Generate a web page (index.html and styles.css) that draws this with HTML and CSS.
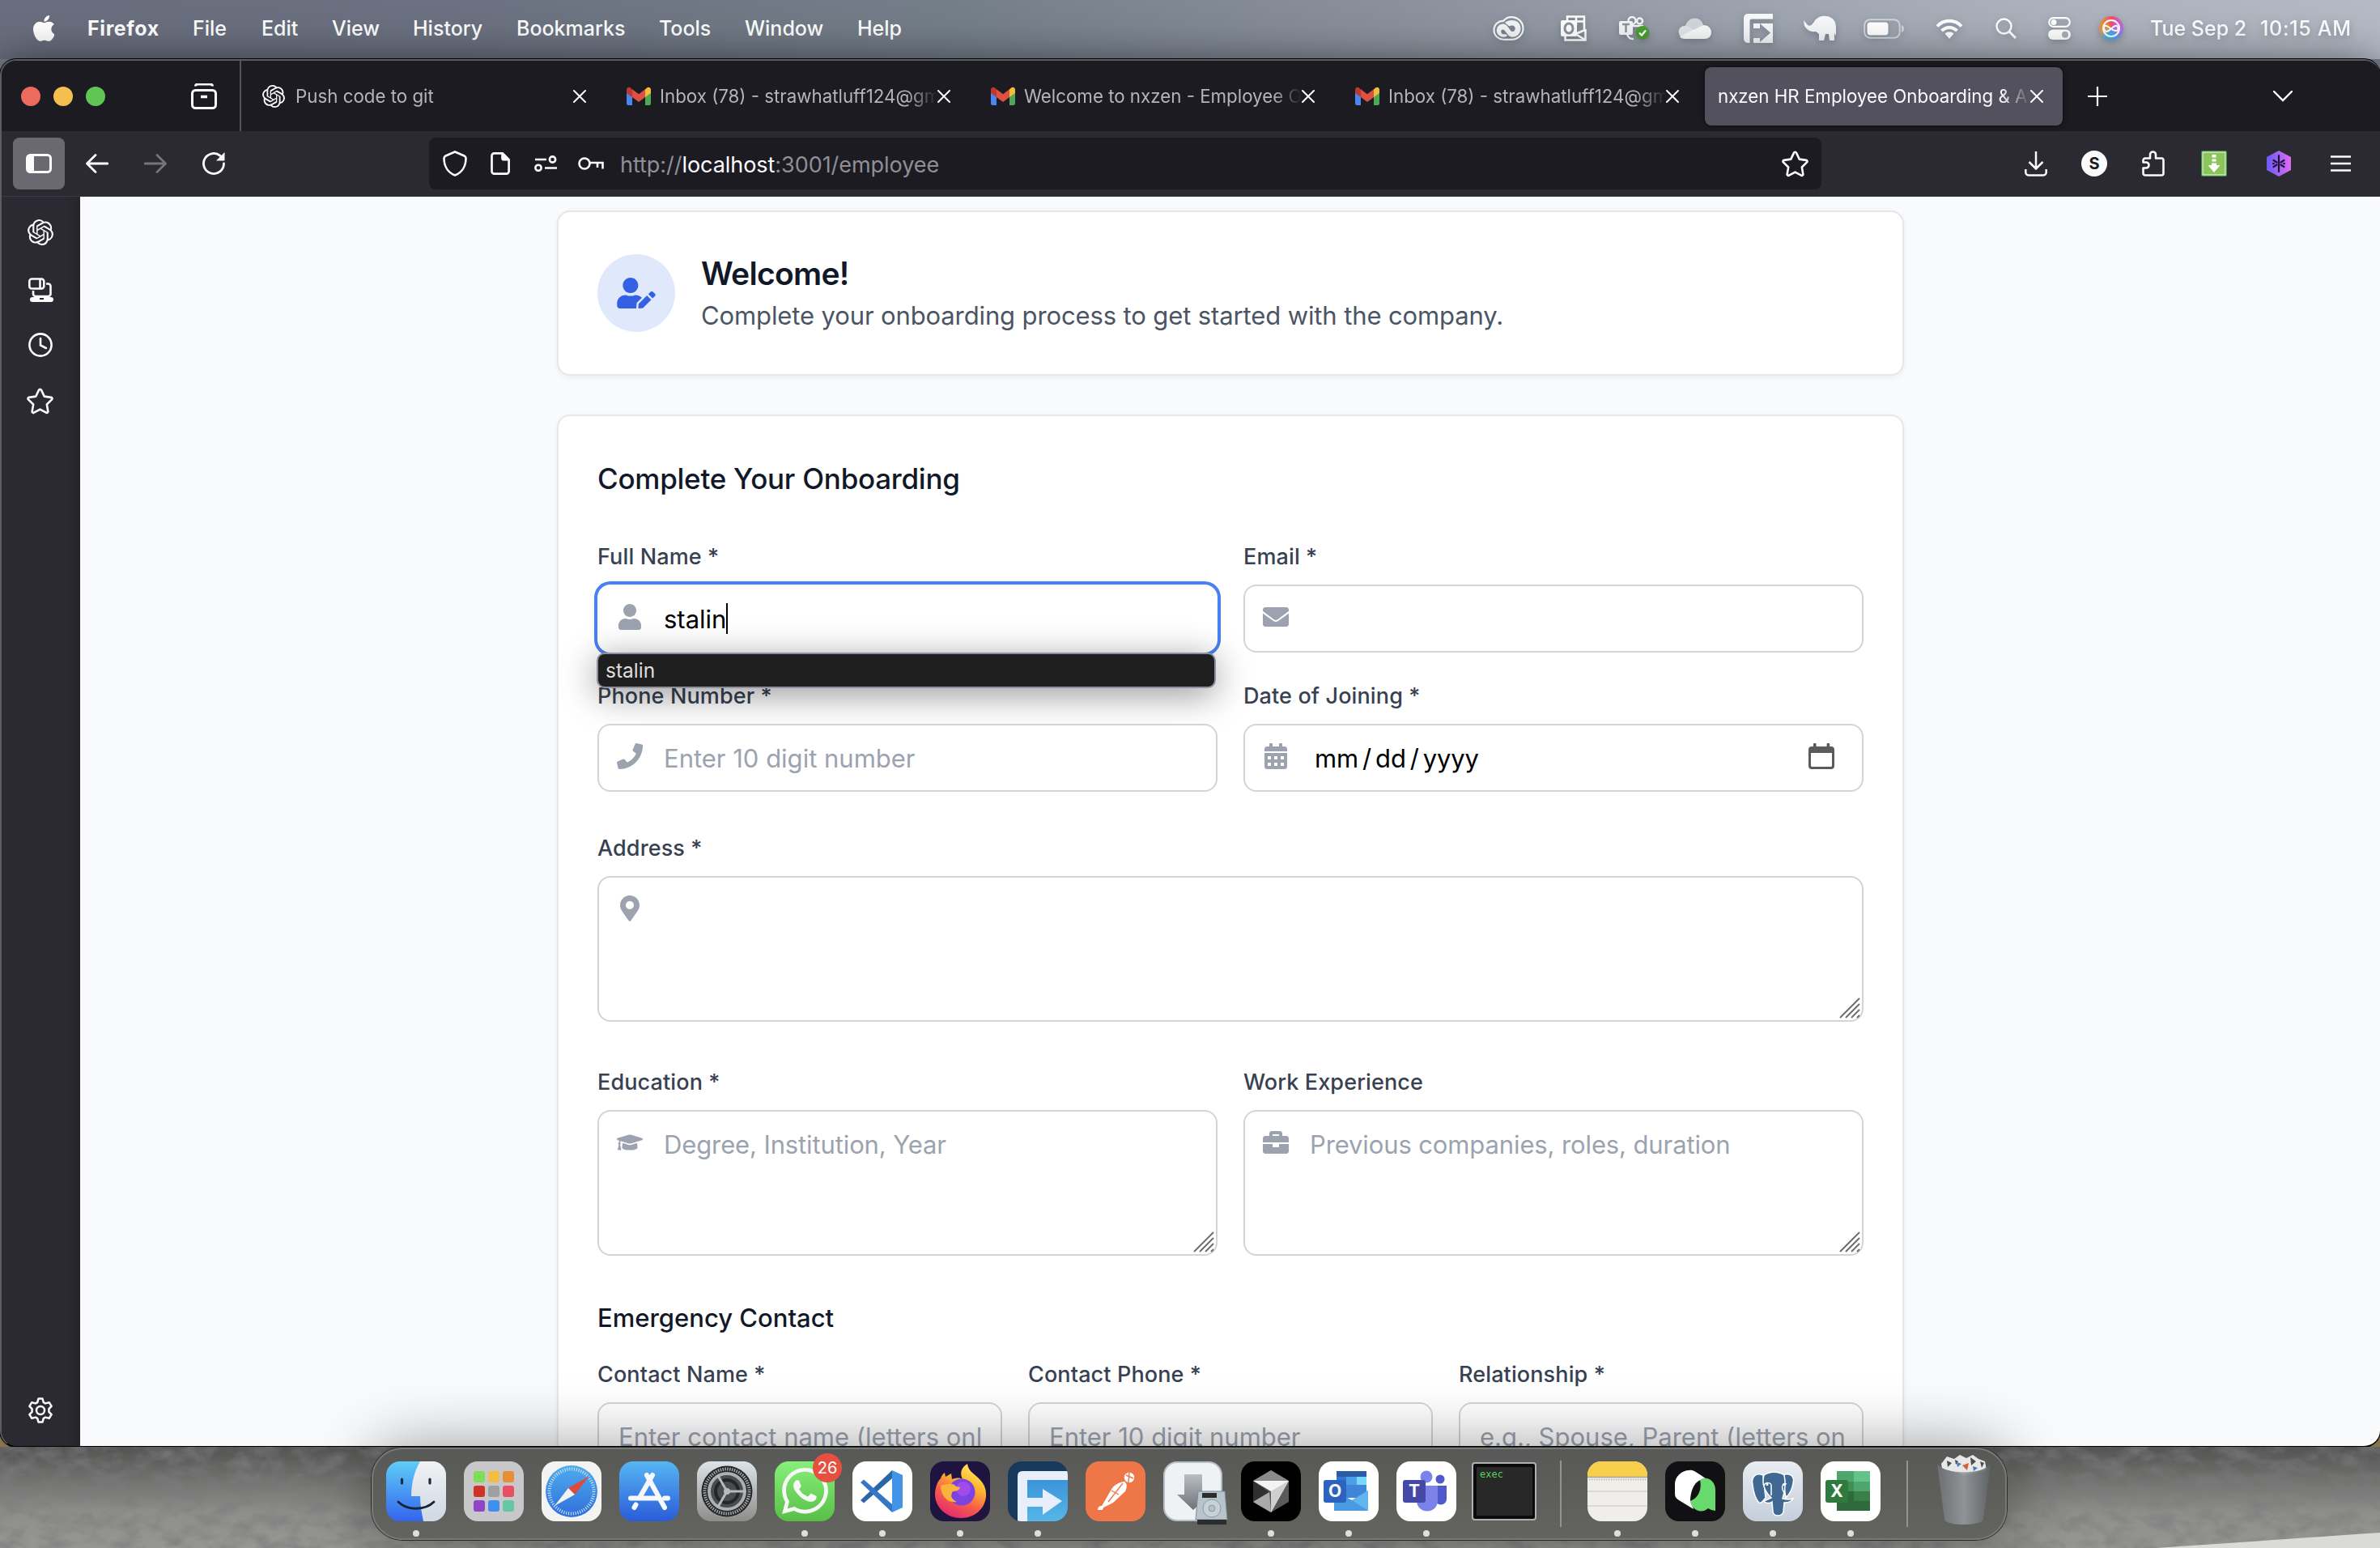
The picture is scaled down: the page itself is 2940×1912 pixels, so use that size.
FILE: index.html
```html
<!DOCTYPE html>
<html lang="en">
<head>
<meta charset="utf-8">
<title>nxzen HR Employee Onboarding</title>
<link rel="stylesheet" href="styles.css">
</head>
<body>
<svg class="defs" width="0" height="0" aria-hidden="true">
  <symbol id="openai" viewBox="0 0 24 24"><path d="M22.2819 9.8211a5.9847 5.9847 0 0 0-.5157-4.9108 6.0462 6.0462 0 0 0-6.5098-2.9A6.0651 6.0651 0 0 0 4.9807 4.1818a5.9847 5.9847 0 0 0-3.9977 2.9 6.0462 6.0462 0 0 0 .7427 7.0966 5.98 5.98 0 0 0 .511 4.9107 6.051 6.051 0 0 0 6.5146 2.9001A5.9847 5.9847 0 0 0 13.2599 24a6.0557 6.0557 0 0 0 5.7718-4.2058 5.9894 5.9894 0 0 0 3.9977-2.9001 6.0557 6.0557 0 0 0-.7475-7.0729zm-9.022 12.6081a4.4755 4.4755 0 0 1-2.8764-1.0408l.1419-.0804 4.7783-2.7582a.7948.7948 0 0 0 .3927-.6813v-6.7369l2.02 1.1686a.071.071 0 0 1 .038.052v5.5826a4.504 4.504 0 0 1-4.4945 4.4944zm-9.6607-4.1254a4.4708 4.4708 0 0 1-.5346-3.0137l.142.0852 4.783 2.7582a.7712.7712 0 0 0 .7806 0l5.8428-3.3685v2.3324a.0804.0804 0 0 1-.0332.0615L9.74 19.9502a4.4992 4.4992 0 0 1-6.1408-1.6464zM2.3408 7.8956a4.485 4.485 0 0 1 2.3655-1.9728V11.6a.7664.7664 0 0 0 .3879.6765l5.8144 3.3543-2.0201 1.1685a.0757.0757 0 0 1-.071 0l-4.8303-2.7865A4.504 4.504 0 0 1 2.3408 7.872zm16.5963 3.8558L13.1038 8.364 15.1192 7.2a.0757.0757 0 0 1 .071 0l4.8303 2.7913a4.4944 4.4944 0 0 1-.6765 8.1042v-5.6772a.79.79 0 0 0-.407-.667zm2.0107-3.0231l-.142-.0852-4.7735-2.7818a.7759.7759 0 0 0-.7854 0L9.409 9.2297V6.8974a.0662.0662 0 0 1 .0284-.0615l4.8303-2.7866a4.4992 4.4992 0 0 1 6.6802 4.66zM8.3065 12.863l-2.02-1.1638a.0804.0804 0 0 1-.038-.0567V6.0742a4.4992 4.4992 0 0 1 7.3757-3.4537l-.142.0805L8.704 5.459a.7948.7948 0 0 0-.3927.6813zm1.0976-2.3654l2.602-1.4998 2.6069 1.4998v2.9994l-2.5974 1.4997-2.6067-1.4997Z"/></symbol>
  <symbol id="gmail" viewBox="0 0 30 24"><path fill="#4a86ee" d="M0 5h7v18H2.500a2.500 2.500 0 0 1-2.500-2.500z"/><path fill="#4fa855" d="M23 5h7v15.500a2.500 2.500 0 0 1-2.500 2.500H23z"/><path fill="#f3bd3a" d="M23 3.500 25 1.500c2-1.500 5-.5 5 2.500v4l-7 5z"/><path fill="#b83a30" d="M7 3.500 5 1.500c-2-1.500-5-.5-5 2.500v4l7 5z"/><path fill="#dd5043" d="m7 3.200 8 6 8-6V13l-8 6-8-6z"/></symbol>
  <symbol id="close" viewBox="0 0 16 16"><path d="m1 1 14 14M15 1 1 15" stroke="currentColor" stroke-width="2" fill="none" stroke-linecap="round"/></symbol>
  <symbol id="star" viewBox="0 0 32 32"><path d="M14.600 2.600 10.900 10.300 2.700 11.500c-1.200.2-1.700 1.600-.8 2.500l6 5.900-1.400 8.300c-.2 1.200 1 2.100 2.100 1.600L16 25.800l7.400 4c1.100.5 2.300-.4 2.100-1.600l-1.400-8.300 6-5.900c.9-.9.4-2.300-.8-2.500l-8.200-1.200-3.700-7.700c-.6-1.100-2.200-1.100-2.800 0z" fill="none" stroke="currentColor" stroke-width="2.500" stroke-linejoin="round"/></symbol>
  <symbol id="grip" viewBox="0 0 26 26"><path d="M1 25 25 1M8 25 25 8M15 25 25 15M22 25l3-3" stroke="#6f6f6f" stroke-width="2" fill="none"/></symbol>
</svg>

<header class="menubar">
  <svg class="apple" viewBox="4 32 366 448"><path fill="#fff" d="M318.700 268.700c-.2-36.700 16.400-64.400 50-84.800-18.800-26.900-47.200-41.700-84.700-44.600-35.500-2.800-74.300 20.700-88.500 20.700-15 0-49.400-19.700-76.400-19.700C63.300 141.200 4 184.800 4 273.500q0 39.300 14.400 81.200c12.800 36.700 59 126.700 107.200 125.200 25.200-.6 43-17.900 75.800-17.900 31.800 0 48.300 17.900 76.400 17.900 48.600-.7 90.400-82.500 102.600-119.300-65.200-30.700-61.700-90-61.700-91.900zm-56.600-164.200c27.300-32.400 24.800-61.900 24-72.500-24.100 1.400-52 16.400-67.900 34.900-17.500 19.800-27.800 44.300-25.600 71.900 26.100 2 49.900-11.400 69.500-34.300z"/></svg>
  <nav class="menus">
    <b class="m-app">Firefox</b><span class="m-file">File</span><span class="m-edit">Edit</span><span class="m-view">View</span><span class="m-history">History</span><span class="m-bookmarks">Bookmarks</span><span class="m-tools">Tools</span><span class="m-window">Window</span><span>Help</span>
  </nav>
  <div class="status">
    <svg class="s-cc" viewBox="0 0 39 30" width="39" height="30"><g fill="none" stroke="#f4f5f6" stroke-width="2.200"><path d="M13 6C16 2.500 19.500 1.200 23 1.200c8 0 14.500 6 14.500 13.800S31 28.800 23 28.800H14C7 28.800 1.500 24 1.500 17.200S7 5.500 13 6z"/></g><path fill="#f4f5f6" d="M15 8c6-5 19-4 19.500 7 .2 6-4.500 10.800-10.500 10.800-6-.5-8-9-11.500-9.300-3-.2-3 5.500.5 5.800 2 .2 3-.5 4.500.8 1 1-.5 2.600-4 2.700C2 25 2 10 13 9.500c6 0 7.500 9 11 9.600 5 .3 5-7.500 0-7.500-2 0-3 1.500-4.500.2C18 10.500 16 9 15 8z"/></svg>
    <svg class="s-outlook" viewBox="0 0 32 32" width="32" height="32"><g fill="none" stroke="#fff" stroke-width="2.500"><path d="M8 7V1.500h21V17M19 2v10M20 7.500h9M30.500 17v13.500H5.500V25M30 18 18 23l12 7"/></g><rect y="6" width="20" height="20" rx="2" fill="#fff"/><ellipse cx="10" cy="16" rx="5" ry="6" fill="none" stroke="#8b919b" stroke-width="3"/></svg>
    <svg class="s-teams" viewBox="0 0 38 30" width="38" height="30"><g fill="none" stroke="#f4f5f6" stroke-width="2.400"><circle cx="16" cy="5.500" r="4.500"/><circle cx="25.500" cy="6" r="3.500"/><path d="M10 22c1 4 4 6.500 8 6M16 12h14"/></g><rect y="6" width="17" height="17" rx="2" fill="#f4f5f6"/><path d="M4 10h9M8.500 10v10" stroke="#8d949e" stroke-width="2.500"/><circle cx="29" cy="20.500" r="8.500" fill="#4a9e30"/><path d="m25 20.500 3 3 5-6" fill="none" stroke="#fff" stroke-width="2.200"/></svg>
    <svg class="s-cloud" viewBox="0 0 41 26" width="41" height="26"><path fill="#d3d7dc" d="M9 10C12-2 28-3 31 9l-12 9z"/><path fill="#e3e6e9" d="M2 22C-2 14 4 9 11 10l11 6-10 9H8c-3 0-5-1-6-3z"/><path fill="#f8f9f9" d="M31 9c7 0 10 5 10 9 0 5-4 8-8 8H8c-3 0-5-1-6-3z"/></svg>
    <svg class="s-fwd" viewBox="0 0 36 36" width="36" height="36"><path fill="#f7f8f9" d="M5 0h31v6.500H10a2.500 2.500 0 0 0-2.500 2.500v27H5a5 5 0 0 1-5-5V5a5 5 0 0 1 5-5z"/><path fill="#f7f8f9" d="M12 12h24v24H12v-6h8v5l13-11.500L20 12v6h-8z"/></svg>
    <svg class="s-eleph" viewBox="0 0 41 32" width="41" height="32"><path fill="#f7f8f9" d="M0 6l5 6c4 2 6-1 9-6 4-5 10-6 14-5 9 1 12 7 12 14v10l-2-3v9h-6l-1-8h-4l-2 8h-6v-8l-4-3C7 21 4 17 1 13z"/></svg>
    <svg class="s-batt" viewBox="0 0 52 25" width="52" height="25"><rect x="1.200" y="1.200" width="43.500" height="22.600" rx="7" fill="none" stroke="#d0d5da" stroke-width="2"/><rect x="4.500" y="4.500" width="26" height="16" rx="4" fill="#fff"/><path fill="#d0d5da" d="M47 8c4 1 4 8 0 9z"/></svg>
    <svg class="s-wifi" viewBox="0 0 34 25" width="34" height="25"><g fill="none" stroke="#fff" stroke-width="4"><path d="M2 9.500C10 .5 24 .5 32 9.500M7.500 15C13 9.500 21 9.500 26.500 15"/></g><path fill="#fff" d="M17 25l-5.500-6.500c3-3 8-3 11 0z"/></svg>
    <svg class="s-search" viewBox="0 0 26 26" width="26" height="26"><circle cx="10.500" cy="10.500" r="9" fill="none" stroke="#fff" stroke-width="2.400"/><path d="m17 17 8 8" stroke="#fff" stroke-width="3"/></svg>
    <svg class="s-ctrl" viewBox="0 0 28 28" width="28" height="28"><rect x="1.200" y="1.200" width="25.600" height="10.600" rx="5.300" fill="none" stroke="#fff" stroke-width="2.200"/><circle cx="7" cy="6.500" r="3.500" fill="#fff"/><rect y="15.500" width="28" height="12.500" rx="6.200" fill="#fff"/><circle cx="21" cy="21.700" r="4" fill="#a7afb9"/></svg>
    <span class="s-siri"><svg viewBox="0 0 30 30" width="30" height="30"><circle cx="15" cy="15" r="10" fill="none" stroke="#fff" stroke-width="2"/><path d="M7 12c4-2 8 7 15 6 3-2 1-7-2-6-4 1-6 6-11 7-3-1-4-6-2-7" fill="none" stroke="#fff" stroke-width="2"/></svg></span>
    <span class="date">Tue Sep 2</span><span class="time">10:15 AM</span>
  </div>
</header>

<main class="window">
  <div class="tabstrip">
    <div class="lights"><i class="red"></i><i class="yellow"></i><i class="green"></i>
      <svg class="fxview" viewBox="0 0 32 32" width="32" height="32" fill="none" stroke="#fbfbfe" stroke-width="3"><path d="M5.500 3.500c0-2 1-2.500 3-2.500h15c2 0 3 .5 3 2.500" /><rect x="1.500" y="8.500" width="29" height="22" rx="4"/><path d="M12 16.500h8" stroke-width="3.500"/></svg>
    </div>
    <div class="tabs">
      <div class="tab"><svg class="fav-ai"><use href="#openai"/></svg><span class="tab-title">Push code to git</span><svg class="x"><use href="#close"/></svg></div>
      <div class="tab"><svg class="fav-gm"><use href="#gmail"/></svg><span class="tab-title">Inbox (78) - strawhatluff124@gmail.com</span><svg class="x"><use href="#close"/></svg></div>
      <div class="tab"><svg class="fav-gm"><use href="#gmail"/></svg><span class="tab-title">Welcome to nxzen - Employee Onboarding</span><svg class="x"><use href="#close"/></svg></div>
      <div class="tab"><svg class="fav-gm"><use href="#gmail"/></svg><span class="tab-title">Inbox (78) - strawhatluff124@gmail.com</span><svg class="x"><use href="#close"/></svg></div>
      <div class="tab active"><span class="tab-title">nxzen HR Employee Onboarding &amp; Attendance</span><svg class="x"><use href="#close"/></svg></div>
    </div>
    <svg class="newtab" viewBox="0 0 24 24" width="24" height="24"><path d="M12 0v24M0 12h24" stroke="#fbfbfe" stroke-width="2.200"/></svg>
    <svg class="chev" viewBox="0 0 24 14" width="24" height="14"><path d="m1 1 11 11L23 1" fill="none" stroke="#fbfbfe" stroke-width="2.400" stroke-linecap="round"/></svg>
  </div>

  <div class="toolbar">
    <div class="side-btn"><svg viewBox="0 0 32 24" width="32" height="24"><rect x="1.500" y="1.500" width="29" height="21" rx="4" fill="none" stroke="#fbfbfe" stroke-width="3"/><path d="M2 2h8v20H2z" fill="#fbfbfe"/></svg></div>
    <svg class="back" viewBox="0 0 28 24" width="28" height="24" fill="none" stroke="#fbfbfe" stroke-width="2.800" stroke-linecap="round" stroke-linejoin="round"><path d="M27 12H2M12 1.500 1.500 12 12 22.500"/></svg>
    <svg class="fwd" viewBox="0 0 28 24" width="28" height="24" fill="none" stroke="#75747d" stroke-width="2.800" stroke-linecap="round" stroke-linejoin="round"><path d="M1 12h25M16 1.500 26.500 12 16 22.500"/></svg>
    <svg class="reload" viewBox="0 0 28 28" width="28" height="28"><path d="M26.500 14A12.500 12.500 0 1 1 22 4.400" fill="none" stroke="#fbfbfe" stroke-width="2.800" stroke-linecap="round"/><path d="M27.500 0v9.500a1 1 0 0 1-1 1H17z" fill="#fbfbfe"/></svg>
    <div class="urlbar">
      <svg class="u-shield" viewBox="0 0 30 32" width="30" height="32"><path d="M15 1.500 26.500 6.500c1.400.6 2 1.500 2 3C28.500 20 23 27.500 15 30.500 7 27.500 1.500 20 1.500 9.500c0-1.500.6-2.400 2-3z" fill="none" stroke="#fbfbfe" stroke-width="2.600" stroke-linejoin="round"/></svg>
      <svg class="u-doc" viewBox="0 0 24 28" width="24" height="28"><path d="M4.500 1.400H15l7.600 7.800v14.400a3 3 0 0 1-3 3H4.500a3 3 0 0 1-3-3V4.400a3 3 0 0 1 3-3zM14.500 1.400v5.800a2 2 0 0 0 2 2h6" fill="none" stroke="#fbfbfe" stroke-width="2.700" stroke-linejoin="round"/><path fill="#fbfbfe" d="M15 1v8h8z"/></svg>
      <svg class="u-slide" viewBox="0 0 28 20" width="28" height="20" fill="none" stroke="#fbfbfe" stroke-width="2.600"><path d="M1 5h14M13 15.500h15"/><circle cx="22.500" cy="5" r="3.600"/><circle cx="5" cy="15.300" r="3.600"/></svg>
      <svg class="u-key" viewBox="0 0 32 18" width="32" height="18" fill="none" stroke="#fbfbfe" stroke-width="2.600"><circle cx="8" cy="9" r="6.500"/><path d="M14.500 8h16v7.500M24 8v6"/></svg>
      <span class="url">http://<em>localhost</em>:3001/employee</span>
      <svg class="u-star"><use href="#star"/></svg>
    </div>
    <div class="exts">
      <svg viewBox="0 0 28 31" width="28" height="31" fill="none" stroke="#fbfbfe" stroke-width="2.500"><path d="M14 0v21M5.500 13 14 21.500l8.500-8.500M1.300 22v4a3.500 3.500 0 0 0 3.500 3.500h18.400a3.500 3.500 0 0 0 3.500-3.500v-4"/></svg>
      <span class="ext-s">S</span>
      <svg class="e-puzzle" viewBox="0 0 28 32" width="28" height="32"><path d="M10 9.500V5a3.500 3.500 0 0 1 7 0v4.500h7a2.500 2.500 0 0 1 2.500 2.500v16a2.500 2.500 0 0 1-2.500 2.500H4A2.500 2.500 0 0 1 1.500 28v-6.500H5a3.500 3.500 0 0 0 0-7H1.500V12A2.500 2.500 0 0 1 4 9.500z" fill="none" stroke="#fbfbfe" stroke-width="2.600" stroke-linejoin="round"/></svg>
      <svg class="e-save" viewBox="0 0 32 32" width="32" height="32"><rect width="32" height="32" rx="2" fill="#3d8f3f"/><rect x="2" y="2" width="28" height="28" fill="#8cc55a" stroke="#e6f3da" stroke-width="1.200"/><path fill="#fff" d="M13.500 5h5v3.500h-5zm0 5.500h5v3h-5zM13 15.500h6V18h4.500L16 27l-7.500-9H13z"/></svg>
      <svg class="e-hex" viewBox="0 0 32 32" width="32" height="32"><defs><linearGradient id="hexg"><stop stop-color="#6a5af5"/><stop offset="1" stop-color="#df6bf0"/></linearGradient></defs><path fill="url(#hexg)" d="m16 0 15 8v16l-15 8-15-8V8z"/><path d="M16 6v20M9.500 12l4 2.500M22.500 12l-4 2.500M9.500 20l4-2.500M22.500 20l-4-2.500M9 16h1M22 16h1" stroke="#1b1440" stroke-width="2.200" stroke-linecap="round"/></svg>
      <svg class="e-menu" viewBox="0 0 25 20" width="25" height="20"><path d="M0 1.500h25M0 10h25M0 18.500h25" stroke="#fbfbfe" stroke-width="2.400"/></svg>
    </div>
  </div>

  <div class="body">
    <aside class="sidebar">
      <svg class="sb-ai"><use href="#openai"/></svg>
      <svg class="sb-dev" viewBox="0 0 32 30" width="32" height="30"><g fill="none" stroke="#fbfbfe" stroke-width="2.600"><rect x="2.300" y="1.500" width="18" height="12" rx="3"/><path d="M15.500 1.500v12"/><path d="M23 7.500h2.500a3 3 0 0 1 3 3V20a3 3 0 0 1-3 3H10a3 3 0 0 1-3-3v-4"/></g><path fill="#fbfbfe" fill-rule="evenodd" d="M6 24h23a3 3 0 0 1 0 6H6a3 3 0 0 1 0-6zm9 1v2h5v-2z"/></svg>
      <svg class="sb-clock" viewBox="0 0 30 30" width="30" height="30" fill="none" stroke="#fbfbfe" stroke-width="2.600"><circle cx="15" cy="15" r="13.600"/><path d="M15 7v8.500l7 3.500" stroke-linecap="round"/></svg>
      <svg class="sb-star"><use href="#star"/></svg>
      <svg class="sb-gear" viewBox="0 0 30 32" width="30" height="32" fill="none" stroke="#fbfbfe" stroke-width="2.500" stroke-linejoin="round"><circle cx="15" cy="16" r="5"/><path d="M12.500 1.500h5l1.300 4.600 2.300 1.300 4.600-1.200 2.900 4.600-3.200 3.400v3.600l3.200 3.400-2.900 4.600-4.600-1.200-2.300 1.300-1.300 4.600h-5l-1.300-4.600-2.300-1.300-4.600 1.200-2.900-4.600 3.200-3.400v-3.600l-3.200-3.400 2.900-4.600 4.600 1.200 2.300-1.300z"/></svg>
    </aside>

    <section class="page">
      <div class="card welcome">
        <div class="avatar"><svg viewBox="0 0 640 512" width="48" height="38"><path fill="#3461e3" d="M224 256c70.700 0 128-57.300 128-128S294.700 0 224 0 96 57.300 96 128s57.300 128 128 128zm89.600 32h-16.700c-22.200 10.200-46.900 16-72.900 16s-50.600-5.800-72.900-16h-16.700C60.200 288 0 348.200 0 422.400V464c0 26.500 21.500 48 48 48h274.900c-2.400-6.800-3.400-14-2.600-21.300l6.800-60.900 1.200-11.100 7.900-7.900 77.300-77.300c-24.500-27.700-60-45.500-99.900-45.500zm45.300 145.300l-6.800 61c-1.100 10.200 7.500 18.800 17.600 17.600l60.900-6.800 137.900-137.900-71.700-71.700-137.900 137.800zM633 268.900L595.100 231c-9.300-9.300-24.500-9.300-33.800 0l-37.800 37.800-4.100 4.100 71.800 71.700 41.800-41.800c9.300-9.400 9.300-24.500 0-33.900z"/></svg></div>
        <div><h2>Welcome!</h2><p>Complete your onboarding process to get started with the company.</p></div>
      </div>

      <div class="card form">
        <h3>Complete Your Onboarding</h3>
        <div class="grid two">
          <div class="field"><label>Full Name *</label>
            <div class="input focus"><svg class="ic" viewBox="0 0 448 512"><path d="M224 256c70.700 0 128-57.300 128-128S294.700 0 224 0 96 57.300 96 128s57.300 128 128 128zm89.600 32h-16.700c-22.200 10.200-46.900 16-72.900 16s-50.600-5.800-72.900-16h-16.700C60.200 288 0 348.200 0 422.400V464c0 26.500 21.500 48 48 48h352c26.500 0 48-21.500 48-48v-41.600c0-74.200-60.200-134.400-134.400-134.400z"/></svg><span class="value">stalin</span><i class="caret"></i><div class="suggest">stalin</div></div></div>
          <div class="field"><label>Email *</label>
            <div class="input"><svg class="ic" viewBox="0 0 512 512"><path d="M502.300 190.800c3.900-3.100 9.700-.2 9.700 4.700V400c0 26.500-21.500 48-48 48H48c-26.500 0-48-21.500-48-48V195.600c0-5 5.700-7.800 9.700-4.700 22.400 17.400 52.100 39.500 154.100 113.600 21.100 15.400 56.700 47.800 92.200 47.600 35.700.3 72-32.800 92.300-47.600 102-74.100 131.600-96.300 154-113.700zM256 320c23.200.4 56.600-29.200 73.400-41.400 132.700-96.300 142.800-104.700 173.400-128.700 5.800-4.500 9.200-11.500 9.200-18.900v-19c0-26.500-21.500-48-48-48H48c-26.500 0-48 21.500-48 48v19c0 7.400 3.400 14.300 9.200 18.900 30.600 23.900 40.700 32.400 173.400 128.700 16.800 12.200 50.200 41.800 73.400 41.400z"/></svg></div></div>
          <div class="field"><label>Phone Number *</label>
            <div class="input"><svg class="ic" viewBox="0 0 512 512"><path d="M493.400 24.600l-104-24c-11.300-2.600-22.900 3.300-27.500 13.900l-48 112c-4.200 9.800-1.400 21.300 6.900 28l60.600 49.600c-36 76.700-98.900 140.500-177.200 177.200l-49.600-60.600c-6.800-8.300-18.200-11.100-28-6.900l-112 48C3.900 366.500-2 378.100.6 389.400l24 104C27.100 504.200 36.700 512 48 512c256.100 0 464-207.500 464-464 0-11.200-7.700-20.900-18.600-23.400z"/></svg><span class="ph">Enter 10 digit number</span></div></div>
          <div class="field"><label>Date of Joining *</label>
            <div class="input"><svg class="ic" viewBox="0 0 448 512"><path fill-rule="evenodd" d="M0 464c0 26.500 21.500 48 48 48h352c26.500 0 48-21.500 48-48V192H0zM64 268q0-12 12-12h40q12 0 12 12v40q0 12-12 12H76q-12 0-12-12zm128 0q0-12 12-12h40q12 0 12 12v40q0 12-12 12h-40q-12 0-12-12zm128 0q0-12 12-12h40q12 0 12 12v40q0 12-12 12h-40q-12 0-12-12zM64 396q0-12 12-12h40q12 0 12 12v40q0 12-12 12H76q-12 0-12-12zm128 0q0-12 12-12h40q12 0 12 12v40q0 12-12 12h-40q-12 0-12-12zm128 0q0-12 12-12h40q12 0 12 12v40q0 12-12 12h-40q-12 0-12-12zM400 64h-48V16q0-16-16-16h-32q-16 0-16 16v48H160V16q0-16-16-16h-32q-16 0-16 16v48H48C21.500 64 0 85.500 0 112v48h448v-48c0-26.500-21.500-48-48-48z"/></svg><span class="dateval"><span>mm</span><span>/</span><span>dd</span><span>/</span><span>yyyy</span></span>
              <svg class="picker" viewBox="0 0 32 32" width="32" height="32"><path fill="#5b5b5b" fill-rule="evenodd" d="M6 1.500a1.500 1.500 0 0 1 3.600 0V4h13V1.500a1.500 1.500 0 0 1 3.600 0V4H28a4 4 0 0 1 4 4v20a4 4 0 0 1-4 4H4a4 4 0 0 1-4-4V8a4 4 0 0 1 4-4h2zM3 12v15.500A1.500 1.500 0 0 0 4.500 29h23a1.500 1.500 0 0 0 1.500-1.500V12z"/></svg></div></div>
        </div>
        <div class="field address"><label>Address *</label>
          <div class="input area"><svg class="ic" viewBox="0 0 384 512"><path d="M172.268 501.670C26.970 291.031 0 269.413 0 192 0 85.961 85.961 0 192 0s192 85.961 192 192c0 77.413-26.970 99.031-172.268 309.670-9.535 13.774-29.930 13.773-39.464 0zM192 272c44.183 0 80-35.817 80-80s-35.817-80-80-80-80 35.817-80 80 35.817 80 80 80z"/></svg><svg class="grip"><use href="#grip"/></svg></div></div>
        <div class="grid two history">
          <div class="field"><label>Education *</label>
            <div class="input area"><svg class="ic" viewBox="0 0 640 512"><path d="M622.340 153.200L343.400 67.500c-15.200-4.670-31.600-4.670-46.790 0L17.660 153.200c-23.540 7.230-23.540 38.360 0 45.590l48.630 14.940c-10.670 13.190-17.230 29.280-17.880 46.900C38.780 266.150 32 276.110 32 288c0 10.780 5.680 19.850 13.860 25.650L20.330 428.530C18.110 438.520 25.710 448 35.940 448h56.110c10.240 0 17.840-9.480 15.620-19.470L82.140 313.650C90.320 307.850 96 298.780 96 288c0-11.570-6.470-21.250-15.660-26.870.76-15.020 8.440-28.300 20.690-36.720L296.600 284.500c9.060 2.780 26.440 6.250 46.790 0l278.950-85.700c23.550-7.240 23.550-38.360 0-45.600zM352.790 315.090c-28.530 8.760-52.840 3.920-65.590 0l-145.020-44.550L128 384c0 35.350 85.960 64 192 64s192-28.650 192-64l-14.180-113.470-145.030 44.560z"/></svg><span class="ph">Degree, Institution, Year</span><svg class="grip"><use href="#grip"/></svg></div></div>
          <div class="field"><label>Work Experience</label>
            <div class="input area"><svg class="ic" viewBox="0 0 512 512"><path d="M320 336c0 8.840-7.160 16-16 16h-96c-8.840 0-16-7.160-16-16v-48H0v144c0 25.600 22.400 48 48 48h416c25.600 0 48-22.400 48-48V288H320v48zm144-208h-80V80c0-25.600-22.400-48-48-48H176c-25.600 0-48 22.400-48 48v48H48c-25.600 0-48 22.400-48 48v80h512v-80c0-25.600-22.400-48-48-48zm-144 0H192V96h128v32z"/></svg><span class="ph">Previous companies, roles, duration</span><svg class="grip"><use href="#grip"/></svg></div></div>
        </div>
        <h4>Emergency Contact</h4>
        <div class="grid three">
          <div class="field"><label>Contact Name *</label><div class="input plain"><span class="ph">Enter contact name (letters only)</span></div></div>
          <div class="field"><label>Contact Phone *</label><div class="input plain"><span class="ph">Enter 10 digit number</span></div></div>
          <div class="field"><label>Relationship *</label><div class="input plain"><span class="ph">e.g., Spouse, Parent (letters only)</span></div></div>
        </div>
      </div>
    </section>
  </div>
</main>

<footer class="desktop">
  <svg class="rock" width="2940" height="128" preserveAspectRatio="none"><filter id="grain" x="0" y="0" width="100%" height="100%"><feTurbulence type="fractalNoise" baseFrequency="0.035 0.06" numOctaves="5" seed="7"/><feColorMatrix values="0 0 0 0 .2  0 0 0 0 .2  0 0 0 0 .21  1.600 0 0 0 -.6"/></filter><rect width="2940" height="128" filter="url(#grain)"/><path d="M2620 128 2940 106v22z" fill="#dadad8"/></svg>
  <div class="dock">
    <div class="slot on"><svg viewBox="0 0 74 74"><defs><linearGradient id="fb" x2="0" y2="1"><stop stop-color="#5ecdf9"/><stop offset="1" stop-color="#3464ec"/></linearGradient><linearGradient id="fw" x2="0" y2="1"><stop stop-color="#f1f1f4"/><stop offset="1" stop-color="#cfd8e4"/></linearGradient><clipPath id="rr"><rect width="74" height="74" rx="17"/></clipPath></defs><g clip-path="url(#rr)"><path fill="url(#fb)" d="M0 0h74v74H0z"/><path fill="url(#fw)" d="M42 0h32v74H46c-2-10-4-20-4-31H31C31 25 36 10 42 0z"/></g><path d="M19.500 22v5M54 22v5" stroke="#1e2a3c" stroke-width="3.200" stroke-linecap="round"/><path d="M15 50c11 11 33 11 44 0" fill="none" stroke="#14213a" stroke-width="2.800" stroke-linecap="round"/></svg></div>
    <div class="slot"><svg viewBox="0 0 74 74"><rect width="74" height="74" rx="17" fill="#c8c8ca"/><g><rect x="12" y="12" width="14" height="14" rx="3" fill="#7be055"/><rect x="30" y="12" width="14" height="14" rx="3" fill="#f3bd43"/><rect x="48" y="12" width="14" height="14" rx="3" fill="#e78e37"/><rect x="12" y="30" width="14" height="14" rx="3" fill="#cb3426"/><rect x="30" y="30" width="14" height="14" rx="3" fill="#9da0a2"/><rect x="48" y="30" width="14" height="14" rx="3" fill="#ea4e62"/><rect x="12" y="48" width="14" height="14" rx="3" fill="#9044c8"/><rect x="30" y="48" width="14" height="14" rx="3" fill="#3f8ff0"/><rect x="48" y="48" width="14" height="14" rx="3" fill="#67c6a4"/></g></svg></div>
    <div class="slot"><svg viewBox="0 0 74 74"><defs><linearGradient id="sf" x2="0" y2="1"><stop stop-color="#4facec"/><stop offset="1" stop-color="#2f6fdc"/></linearGradient></defs><rect width="74" height="74" rx="17" fill="#f3f3f3"/><circle cx="37" cy="37" r="32" fill="url(#sf)"/><circle cx="37" cy="37" r="27.500" fill="none" stroke="#d7e8fa" stroke-width="4" stroke-dasharray="1 1.880"/><path fill="#e0493c" d="M59 18 33 33l8 8z"/><path fill="#f3f3f3" d="m16 55 17-22 8 8z"/></svg></div>
    <div class="slot"><svg viewBox="0 0 74 74"><defs><linearGradient id="as" x2="0" y2="1"><stop stop-color="#57b6f4"/><stop offset="1" stop-color="#2a5bd8"/></linearGradient></defs><rect width="74" height="74" rx="17" fill="url(#as)"/><g stroke="#f6f8fb" stroke-width="6" stroke-linecap="round"><path d="M41 17 25 45M34 17l22 40M14 45.500h33M56 45.500h4M20.500 53.500l-2 3.500"/></g></svg></div>
    <div class="slot"><svg viewBox="0 0 74 74"><defs><linearGradient id="st" x2="0" y2="1"><stop stop-color="#dbe3ea"/><stop offset="1" stop-color="#8f8d8b"/></linearGradient></defs><rect width="74" height="74" rx="17" fill="url(#st)"/><circle cx="37" cy="37" r="31.500" fill="#252627"/><circle cx="37" cy="37" r="27.500" fill="none" stroke="#a4a8ab" stroke-width="4" stroke-dasharray="1.500 1.380"/><circle cx="37" cy="37" r="22" fill="#4a4c4d" stroke="#aab0b4" stroke-width="4"/><circle cx="37" cy="37" r="14" fill="none" stroke="#252627" stroke-width="4"/><path d="M37 37h23M37 37 25.500 17M37 37 25.500 57" stroke="#b5babd" stroke-width="3"/><circle cx="37" cy="37" r="4" fill="#b5babd"/></svg></div>
    <div class="slot on"><svg viewBox="0 0 74 74"><defs><linearGradient id="wa" x2="0" y2="1"><stop stop-color="#86f07a"/><stop offset="1" stop-color="#58bf46"/></linearGradient></defs><rect width="74" height="74" rx="17" fill="url(#wa)"/><g transform="translate(9 4) scale(.127)"><path fill="#f6f8f6" d="M380.900 97.100C339 55.100 283.200 32 223.900 32c-122.400 0-222 99.600-222 222 0 39.100 10.200 77.300 29.600 111L0 480l117.700-30.900c32.400 17.700 68.900 27 106.100 27h.1c122.300 0 224.100-99.600 224.100-222 0-59.300-25.200-115-67.100-157zm-157 341.600c-33.200 0-65.700-8.900-94-25.700l-6.700-4-69.800 18.300L72 359.200l-4.400-7c-18.500-29.400-28.200-63.300-28.200-98.200 0-101.700 82.800-184.500 184.600-184.500 49.300 0 95.600 19.200 130.400 54.100 34.800 34.900 56.200 81.200 56.100 130.500 0 101.800-84.900 184.600-186.600 184.600zm101.200-138.200c-5.500-2.800-32.800-16.200-37.900-18-5.100-1.900-8.800-2.800-12.500 2.800-3.700 5.600-14.300 18-17.600 21.800-3.200 3.700-6.500 4.200-12 1.400-32.600-16.300-54-29.100-75.500-66-5.700-9.800 5.700-9.100 16.300-30.300 1.800-3.700.9-6.900-.5-9.700-1.400-2.800-12.500-30.100-17.100-41.200-4.500-10.800-9.100-9.300-12.500-9.500-3.200-.2-6.900-.2-10.600-.2-3.700 0-9.700 1.400-14.800 6.900-5.100 5.600-19.400 19-19.400 46.300 0 27.300 19.900 53.700 22.600 57.400 2.800 3.700 39.100 59.700 94.800 83.800 35.200 15.200 49 16.500 66.600 13.900 10.700-1.600 32.800-13.400 37.400-26.400 4.600-13 4.600-24.100 3.200-26.400-1.300-2.500-5-3.900-10.500-6.600z"/></g></svg><span class="badge">26</span></div>
    <div class="slot on"><svg viewBox="0 0 74 74"><rect width="74" height="74" rx="17" fill="#fff"/><path fill="#2a66a8" d="m10 48 4 3.500L49 21V11z"/><path fill="#3577c6" d="m10 26 4-3.500L49 53v10z"/><path fill="#4393e6" d="m49 11 13 6v40l-13 6z"/></svg></div>
    <div class="slot on"><svg viewBox="0 0 74 74"><defs><linearGradient id="ff" x1=".8" y1="0" x2=".3" y2="1"><stop stop-color="#fff06a"/><stop offset=".35" stop-color="#ffb52e"/><stop offset=".65" stop-color="#f9604a"/><stop offset="1" stop-color="#e02a70"/></linearGradient></defs><rect width="74" height="74" rx="17" fill="#1f1440"/><path fill="url(#ff)" d="M13 21c1-3 2-5 5-7l1 5 7-4 1 7c6-2 9-2 13 0-4-8-1-15 6-19 1 9 8 12 13 17 6 6 11 12 10 24-2 15-14 26-31 26S7 58 6 42c0-8 2-16 7-21z"/><circle cx="39" cy="38" r="16.500" fill="#7b43e0"/><circle cx="41" cy="34" r="9" fill="#a34bea"/><path fill="#f9b23a" d="M13 30c8-2 16-4 19 1l5 1c-1 4-5 5-9 5-4 6-1 10 5 13-12 2-20-8-20-20z"/></svg></div>
    <div class="slot on"><svg viewBox="0 0 74 74"><defs><linearGradient id="fd" x2="0" y2="1"><stop stop-color="#3a93d8"/><stop offset="1" stop-color="#5bbcea"/></linearGradient></defs><rect width="74" height="74" rx="17" fill="#173a5c"/><g clip-path="url(#rr)"><path fill="url(#fd)" d="M22 22h60v60H22z"/><path fill="#e7eefc" d="M18 12h56v11H24v22h19V34l24 15-24 17V56H24v18H12V18q0-6 6-6z"/></g></svg></div>
    <div class="slot"><svg viewBox="0 0 74 74"><rect width="74" height="74" rx="17" fill="#ef7747"/><circle cx="54" cy="20" r="6.200" fill="#fff"/><path d="m50 17 9 4M54 14l-1 12" stroke="#ef7747" stroke-width="1.500"/><path fill="#fff" d="M48 25c4 3 3 8 1 12L34 51 22 57l-1 3h-6c0-3 2-5 5-5l10-17c3-7 9-12 18-13z"/><path d="m32 36 9 5M46 27 28 50" stroke="#ef7747" stroke-width="1.400"/></svg></div>
    <div class="slot"><svg viewBox="0 0 74 74"><defs><linearGradient id="ar" x2="0" y2="1"><stop stop-color="#b9bec3"/><stop offset="1" stop-color="#6f7376"/></linearGradient></defs><rect x="1" y="1" width="71" height="72" rx="16" fill="#f0f1f5" stroke="#b5bfc6" stroke-width="2"/><path fill="url(#ar)" d="M26 16h22v25h10L37 60 17 41h9z"/><path fill="#b8c4cc" stroke="#7f8c94" d="M43 37h33l3 35H40z"/><path fill="#2b2c2e" d="M42 72h36v6H42zM48 39h18v6H48z"/><circle cx="60" cy="58" r="11" fill="#c7d1d8" stroke="#8c99a1"/><circle cx="60" cy="58" r="4" fill="#b4c0c8" stroke="#8c99a1"/></svg></div>
    <div class="slot on"><svg viewBox="0 0 74 74"><rect width="74" height="74" rx="17" fill="#000"/><path fill="#5a5a5a" d="m37 11 22 13v26L37 63 15 50V24z"/><path fill="#8b8b8b" d="m37 11 22 13H15z"/><path fill="#2f2f2f" d="m15 24 20 14-20 12z"/><path fill="#a9a9a9" d="m15 50 20-12 2 25z"/><path fill="#f4f4f4" d="M15 24h44L37 63V37z"/><path fill="#cfcfcf" d="m37 37 22-13-22 39z"/></svg></div>
    <div class="slot on"><svg viewBox="0 0 74 74"><rect width="74" height="74" rx="17" fill="#fff"/><path fill="#2a5ba6" d="M22 12h37v10H22z"/><path fill="#3577cf" d="M22 19h13v16H22z"/><path fill="#4b9fe6" d="M34 19h13v10H34z"/><path fill="#77d8fb" d="M47 19h12v12H47z"/><path fill="#3f86d8" d="M34 29h25v16H34z"/><path fill="#4a9ae2" d="M19 36l22 12 20-12v25H19z"/><path fill="#62b4ee" d="m61 36-20 12 20 13z"/><rect x="6" y="23" width="28" height="28" rx="3" fill="#2c63c0"/><text x="20" y="44" class="tile" font-size="21">O</text></svg></div>
    <div class="slot on"><svg viewBox="0 0 74 74"><rect width="74" height="74" rx="17" fill="#fff"/><circle cx="54" cy="22" r="5.500" fill="#5059c9"/><circle cx="37" cy="19" r="7.500" fill="#7b83eb"/><path fill="#5059c9" d="M47 30h15v16c0 9-12 10-15 2z"/><path fill="#7b83eb" d="M25 30h26v18c0 18-26 18-26 0z"/><rect x="8" y="23" width="28" height="28" rx="3" fill="#4449a8"/><text x="22" y="44" class="tile" font-size="21">T</text></svg></div>
    <div class="slot"><svg class="term" viewBox="0 0 80 72"><rect x="1" y="1" width="78" height="70" rx="3" fill="#0b0b0b" stroke="#a9b3b6" stroke-width="2"/><path fill="#282828" d="M6 6h69v60H6z"/><text x="10" y="19" font-family="'DejaVu Sans Mono',monospace" font-size="12" fill="#55d45a">exec</text></svg></div>
    <i class="sep"></i>
    <div class="slot on"><svg viewBox="0 0 74 74"><g clip-path="url(#rr)"><path fill="#efeeea" d="M0 0h74v74H0z"/><path fill="#f8cf4a" d="M0 0h74v19H0z"/><path d="M0 19.500h74" stroke="#a8a597" stroke-width="1.500"/><path d="M2 22.500h72" stroke="#b6b5b0" stroke-width="1.600" stroke-dasharray="1.500 1.500"/><path d="M0 37h74M0 55h74" stroke="#d4d4da" stroke-width="1.500"/></g></svg></div>
    <div class="slot on"><svg viewBox="0 0 74 74"><rect width="74" height="74" rx="17" fill="#111113"/><path fill="#fff" d="M30 11c5-1 9 3 21 11-12-1-19 9-20 26l4 11-18-11c-5-3-5-6-5-10V28c0-9 8-17 18-17z"/><path fill="#68d96c" d="M43 23c8-6 19 1 19 12v26l-5-1-4-2c-9 8-21 1-22-9 8-3 15-12 12-26z"/></svg></div>
    <div class="slot on"><svg viewBox="0 0 74 74"><defs><linearGradient id="pg" x2="0" y2="1"><stop stop-color="#e9edf3"/><stop offset="1" stop-color="#c4cedb"/></linearGradient></defs><rect width="74" height="74" rx="17" fill="url(#pg)"/><g fill="#3f6893" stroke="#fff" stroke-width="1.500"><path d="M25 17c-10-4-15 3-13 12 1 9 4 18 8 22 3 2 5-3 8-6z"/><path d="M49 17c10-4 15 2 13 10-1 8-5 14-9 18z"/><path d="M26 17c7-5 18-5 25 0 2 9 1 20-2 29 4 1 9 2 13 0-2 4-8 5-11 5l-1 11c-1 6-12 7-13 0l-1-12c-4 3-9 1-10-1l9-4c-8-8-12-18-9-28z"/><path d="M26 30c2-5 9-4 9 0v12M54 28c-5-2-6 3-5 7l4 8" fill="none"/></g><path d="M30 27v3M51 27v3" stroke="#fff" stroke-width="2.500"/></svg></div>
    <div class="slot on"><svg viewBox="0 0 74 74"><rect width="74" height="74" rx="17" fill="#fff"/><path fill="#4ea66d" d="M20 12h21v13H20z"/><path fill="#64c388" d="M41 12h20v13H41z"/><path fill="#3f8f56" d="M20 25h21v12H20z"/><path fill="#4ea66d" d="M41 25h20v12H41z"/><path fill="#2f6a3c" d="M20 37h41v24H20z"/><path fill="#3a7f49" d="M41 37h20v12H41z"/><rect x="6" y="23" width="28" height="28" rx="3" fill="#317a3f"/><text x="20" y="44" class="tile" font-size="21">X</text></svg></div>
    <i class="sep"></i>
    <div class="slot"><svg class="trash" viewBox="0 0 66 88"><defs><linearGradient id="tr"><stop stop-color="#6d7175"/><stop offset=".5" stop-color="#94989c"/><stop offset="1" stop-color="#5f6367"/></linearGradient></defs><path fill="#e8e8e8" d="M5 12 12 3l9 3L28 1l8 4 8-4 7 5 8 3 2 11-28 6L6 18z"/><path fill="#4a4d52" d="m12 8 6 3-5 5zm29-4 7 5-6 5zm12 5 5 2-3 6zm-31-2 4 2-3 4z"/><path fill="#d0603e" d="m31 14 8-3-2 9z"/><path fill="#4a77bf" d="m24 10 6 2-5 4zm20 5 6 2-5 4z"/><path fill="url(#tr)" opacity=".92" d="M0 12c10 14 56 14 66 0l-9 69c-3 8-45 8-48 0z"/></svg></div>
  </div>
</footer>
</body>
</html>
```
FILE: styles.css
```css
* { box-sizing: border-box; }
body {
  margin: 0;
  width: 2940px;
  height: 1912px;
  overflow: hidden;
  display: grid;
  grid-template-rows: 73px 1714px 125px;
  font-family: Inter, "Liberation Sans", sans-serif;
  background: linear-gradient(#74808f, #b89a60);
}
svg { display: block; flex: none; }
.defs { position: absolute; }

/* menu bar */
.menubar {
  display: flex;
  align-items: center;
  background: linear-gradient(90deg, #696d7d 0, #6b7180 20%, #747e89 40%, #8a909b 58%, #9aa1ac 72%, #a9b0ba 84%, #b3bac4 100%);
  color: #fff;
  font-size: 25px;
  padding: 0 33px 3px 41px;
  white-space: pre;
}
.apple { width: 26px; height: 32px; margin-right: 41px; }
.menus { display: flex; font-weight: 500; }
.m-app { width: 130px; font-weight: 700; letter-spacing: .6px; }
.m-file { width: 85px; }
.m-edit { width: 87px; }
.m-view { width: 100px; }
.m-history { width: 128px; }
.m-bookmarks { width: 176px; }
.m-tools { width: 106px; }
.m-window { width: 139px; }
.status { display: flex; align-items: center; margin-left: auto; width: 1063px; font-weight: 500; filter: drop-shadow(0 3px 4px rgba(60, 70, 90, .35)); }
.s-cc { margin-right: 45px; }
.s-outlook { margin-right: 40px; }
.s-teams { margin-right: 35px; }
.s-cloud { margin-right: 40px; }
.s-fwd { margin-right: 38px; }
.s-eleph { margin-right: 33px; }
.s-batt { margin-right: 37px; }
.s-wifi { margin-right: 40px; }
.s-search { margin-right: 39px; }
.s-ctrl { margin-right: 35px; }
.s-siri { width: 30px; height: 30px; border-radius: 50%; margin-right: 33px; background: conic-gradient(#f0506a, #d05ad0, #b070f0, #50a0f0, #40b0e8, #e09a50, #f08a30, #f0506a); }
.date { width: 136px; }
.time { letter-spacing: .7px; }

/* browser window */
.window {
  display: flex;
  flex-direction: column;
  border-radius: 20px;
  border: 2px solid #5d5c63;
  border-bottom: 1px solid #000;
  border-right-width: 0;
  background: #2b2a33;
  overflow: hidden;
  box-shadow: 0 0 0 1px #000, 0 10px 60px rgba(0, 0, 0, .7);
  position: relative;
}
.tabstrip { height: 87px; flex: none; display: flex; align-items: center; background: #1c1b22; }
.lights { width: 296px; height: 100%; display: flex; align-items: center; padding-left: 24px; gap: 16px; border-right: 2px solid #55545c; }
.lights i { width: 24px; height: 24px; border-radius: 50%; }
.red { background: #ed6a5f; }
.yellow { background: #f5bf4f; }
.green { background: #61c554; }
.fxview { margin-left: 90px; }
.tabs { display: flex; gap: 8px; margin-left: 8px; }
.tab { width: 442px; height: 72px; display: flex; align-items: center; padding: 0 24px 0 18px; color: #b4b4b9; border-radius: 8px; }
.tab-title { flex: 1; font-size: 22.300px; white-space: nowrap; overflow: hidden; -webkit-mask-image: linear-gradient(90deg, #000 calc(100% - 36px), transparent); mask-image: linear-gradient(90deg, #000 calc(100% - 36px), transparent); }
.x { width: 16px; height: 16px; color: #fbfbfe; }
.fav-ai { width: 28px; height: 28px; fill: #fbfbfe; margin-right: 13px; }
.fav-gm { width: 30px; height: 24px; margin-right: 11px; }
.tab.active { background: #52515d; color: #fbfbfe; padding-left: 16px; box-shadow: 0 0 6px rgba(0, 0, 0, .6); }
.newtab { margin-left: 31px; }
.chev { margin-left: 205px; }

.toolbar { height: 80px; flex: none; display: flex; align-items: center; padding-left: 14px; background: #2b2a33; }
.side-btn { width: 64px; height: 64px; border-radius: 8px; background: #6a6971; display: grid; place-items: center; }
.back { margin-left: 26px; }
.fwd { margin-left: 44px; }
.reload { margin-left: 44px; }
.urlbar { margin-left: 252px; width: 1720px; height: 64px; border-radius: 8px; background: #1c1b22; display: flex; align-items: center; padding: 0 16px 0 17px; }
.u-doc { margin-left: 29px; }
.u-slide { margin-left: 30px; }
.u-key { margin-left: 26px; }
.url { margin-left: 20px; padding-top: 2px; flex: 1; font-size: 27px; letter-spacing: -.05px; color: #8f8f96; white-space: nowrap; }
.url em { font-style: normal; color: #fbfbfe; }
.u-star { width: 33px; height: 33px; color: #fbfbfe; }
.exts { display: flex; align-items: center; padding-left: 251px; }
.ext-s { margin-left: 42px; width: 32px; height: 32px; border-radius: 50%; background: #fbfbfe; color: #1c1b22; font-weight: 700; font-size: 20px; line-height: 32px; text-align: center; }
.e-puzzle { margin-left: 43px; }
.e-save { margin-left: 45px; }
.e-hex { margin-left: 48px; }
.e-menu { margin-left: 48px; }

.body { flex: 1; display: flex; min-height: 0; border-top: 1px solid #3b3a44; }
.sidebar { width: 97px; flex: none; display: flex; flex-direction: column; align-items: center; padding: 28px 2px 28px 0; background: linear-gradient(90deg, #2b2a33 80px, #26252c 97px); fill: #fbfbfe; color: #fbfbfe; }
.sb-ai { width: 32px; height: 32px; }
.sb-dev { margin-top: 40px; }
.sb-clock { margin-top: 38px; fill: none; }
.sb-star { width: 33px; height: 33px; margin-top: 38px; }
.sb-gear { margin-top: auto; fill: none; }

/* onboarding page */
.page { flex: 1; overflow: hidden; background: #f9fafc; padding: 17px 588px 0 589px; display: flex; flex-direction: column; gap: 48px; }
.card { flex: none; background: #fff; border: 2px solid #e5e7eb; border-radius: 16px; padding: 48px; box-shadow: 0 2px 6px rgba(0, 0, 0, .06); }
.welcome { display: flex; align-items: center; gap: 32px; height: 204px; }
.avatar { width: 96px; height: 96px; border-radius: 50%; background: #dfe9fb; display: grid; place-items: center; }
h2, h3, h4, p { margin: 0; color: #111827; }
h2 { font-size: 39px; line-height: 56px; font-weight: 600; letter-spacing: -.7px; }
p { font-size: 31px; line-height: 48px; color: #4b5563; letter-spacing: -.12px; }
h3 { font-size: 35px; line-height: 60px; font-weight: 500; margin: -1px 0 45px; letter-spacing: -.25px; }
h4 { font-size: 31px; line-height: 56px; font-weight: 500; margin: 49px 0 20px; }
.grid { display: grid; gap: 32px; }
.two { grid-template-columns: 1fr 1fr; }
.three { grid-template-columns: 1fr 1fr 1fr; }
.field { display: flex; flex-direction: column; gap: 13px; min-width: 0; }
label { font-size: 27px; line-height: 43px; font-weight: 500; color: #374151; letter-spacing: .12px; }
.address { margin: 48px 0 53px; }
.input { position: relative; height: 84px; border: 2px solid #d1d5db; border-radius: 16px; background: #fff; display: flex; align-items: center; padding: 0 30px 0 22px; font-size: 31px; white-space: nowrap; }
.ic { width: 32px; height: 32px; margin-right: 26px; margin-top: -4px; fill: #9ca3af; }
.ph { color: #9ca3af; overflow: hidden; }
.area .ph { letter-spacing: -.12px; }
.value { color: #000; }
.caret { width: 2px; height: 38px; background: #000; }
.focus { border-color: transparent; box-shadow: 0 0 0 4px #4a80ef; }
.suggest {
  position: absolute;
  left: -3px;
  top: 82px;
  width: 765px;
  height: 44px;
  border: 2px solid #8f8f9d;
  border-radius: 10px;
  background: #1e1e1e;
  color: #dededc;
  font-size: 24.500px;
  line-height: 40px;
  padding-left: 9px;
  box-shadow: 0 8px 44px rgba(0, 0, 0, .42);
}
.dateval { display: flex; gap: 5px; color: #000; padding-left: 6px; letter-spacing: -.15px; }
.picker { margin: -4px 4px 0 auto; }
.area { height: 180px; align-items: flex-start; padding-top: 17px; line-height: 48px; }
.area .ic { margin-top: 5px; }
.grip { position: absolute; right: 2px; bottom: 2px; width: 26px; height: 26px; }
.plain { padding: 0 22px 0 24px; }

/* desktop and dock */
.desktop { position: relative; display: flex; justify-content: center; align-items: flex-start; padding-top: 1px; background: linear-gradient(#535352, #6e6e6c 30%, #8e8e8a 65%, #969692); }
.rock { position: absolute; left: 0; top: 0; }
.dock { position: relative; left: -1px; display: flex; height: 114px; width: 2020px; padding: 0 5px; border-radius: 38px; background: linear-gradient(#585856, #63635f); border: 2px solid #787876; box-shadow: 0 0 0 1px #2c2c2c, 0 0 80px rgba(0, 0, 0, .4); }
.slot { position: relative; width: 96px; height: 110px; padding: 15px 11px 0; }
.slot svg { width: 74px; height: 74px; overflow: visible; }
.slot .term { width: 80px; height: 72px; margin: 1px 0 0 -3px; }
.slot .trash { width: 66px; height: 88px; margin: -9px 0 0 4px; }
.slot.on::after { content: ""; position: absolute; left: 44px; top: 100px; width: 8px; height: 8px; border-radius: 50%; background: #dededc; }
.badge { position: absolute; left: 58px; top: 5px; width: 36px; height: 36px; border-radius: 50%; background: #e5503f; color: #fff; font-size: 20px; line-height: 36px; text-align: center; }
.sep { width: 2px; height: 82px; margin: 14px 21px 0; background: #93938f; }
.tile { fill: #fff; font-weight: 700; text-anchor: middle; }
```
